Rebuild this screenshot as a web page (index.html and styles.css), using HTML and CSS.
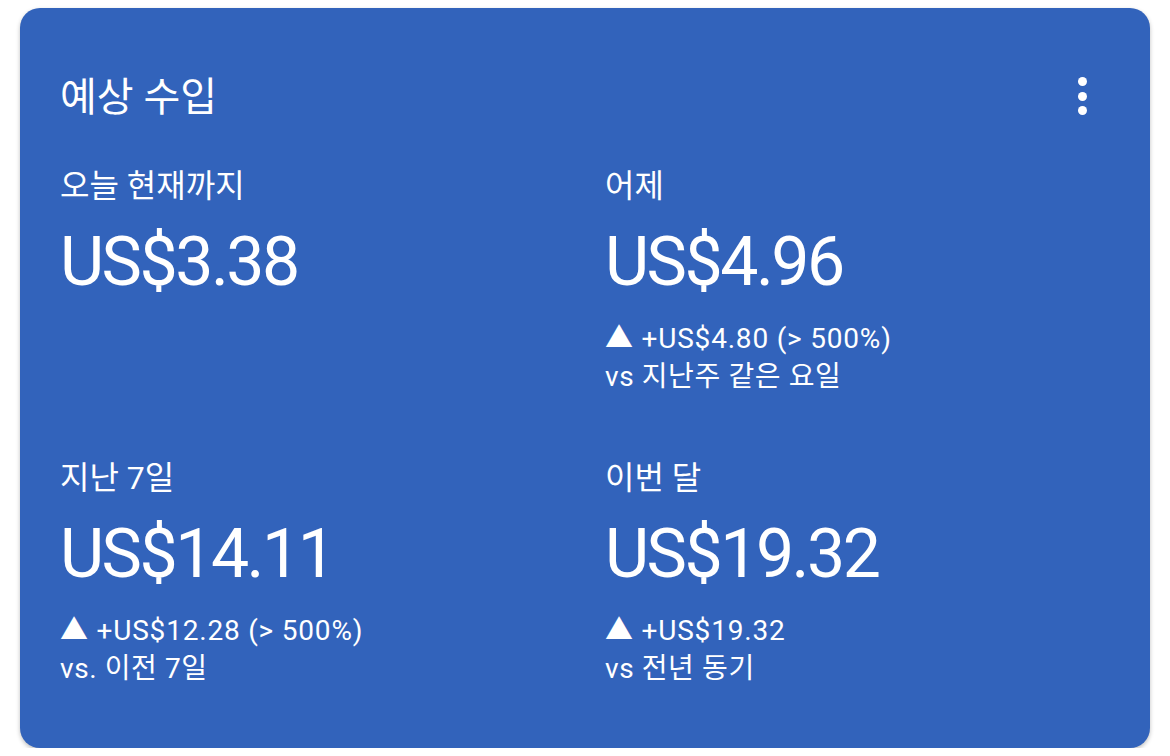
FILE: index.html
```html
<!DOCTYPE html>
<html lang="ko">
<head>
  <meta charset="UTF-8">
  <meta name="viewport" content="width=device-width, initial-scale=1.0">
  <title>예상 수입</title>
  <link rel="stylesheet" href="styles.css">
</head>
<body>

  <div class="card">

    <div class="card-header">
      <div class="card-title">예상 수입</div>
      <div class="more-btn">
        <span class="dot"></span>
        <span class="dot"></span>
        <span class="dot"></span>
      </div>
    </div>

    <div class="stats">

      <div class="stat">
        <div class="stat-label">오늘 현재까지</div>
        <div class="stat-value">US$3.38</div>
      </div>

      <div class="stat">
        <div class="stat-label">어제</div>
        <div class="stat-value">US$4.96</div>
        <div class="stat-change">▲ +US$4.80 (&gt; 500%)</div>
        <div class="stat-compare">vs 지난주 같은 요일</div>
      </div>

      <div class="stat">
        <div class="stat-label">지난 7일</div>
        <div class="stat-value">US$14.11</div>
        <div class="stat-change">▲ +US$12.28 (&gt; 500%)</div>
        <div class="stat-compare">vs. 이전 7일</div>
      </div>

      <div class="stat">
        <div class="stat-label">이번 달</div>
        <div class="stat-value">US$19.32</div>
        <div class="stat-change">▲ +US$19.32</div>
        <div class="stat-compare">vs 전년 동기</div>
      </div>

    </div>

  </div>

</body>
</html>
```

FILE: styles.css
```css
body {
  margin: 0;
  background: #ffffff;
  font-family: Roboto, "Noto Sans CJK KR", sans-serif;
  color: #ffffff;
}

.card {
  margin: 8px 20px 0 20px;
  height: 740px;
  box-sizing: border-box;
  padding: 0 40px;
  background: #3263bb;
  border-radius: 20px;
  box-shadow: 0 2px 4px rgba(0, 0, 0, 0.25);
}

.card-header {
  display: flex;
  align-items: center;
  justify-content: space-between;
  height: 176px;
}

.card-title {
  font-size: 40px;
  margin-top: -4px;
}

.more-btn {
  display: flex;
  flex-direction: column;
  gap: 5.5px;
  margin-right: 23px;
}

.dot {
  width: 9px;
  height: 9px;
  border-radius: 50%;
  background: #ffffff;
}

.stats {
  display: grid;
  grid-template-columns: 545px 1fr;
  grid-template-rows: 292px 1fr;
}

.stat-label {
  font-size: 32px;
  line-height: 1;
  margin-top: -14px;
}

.stat-value {
  font-size: 68px;
  letter-spacing: -2.5px;
  line-height: 1;
  margin-top: 26px;
}

.stat-change {
  font-size: 28px;
  letter-spacing: 0.8px;
  margin-top: 24px;
  line-height: 38px;
}

.stat-compare {
  font-size: 28px;
  letter-spacing: 0.6px;
  line-height: 38px;
}
```
